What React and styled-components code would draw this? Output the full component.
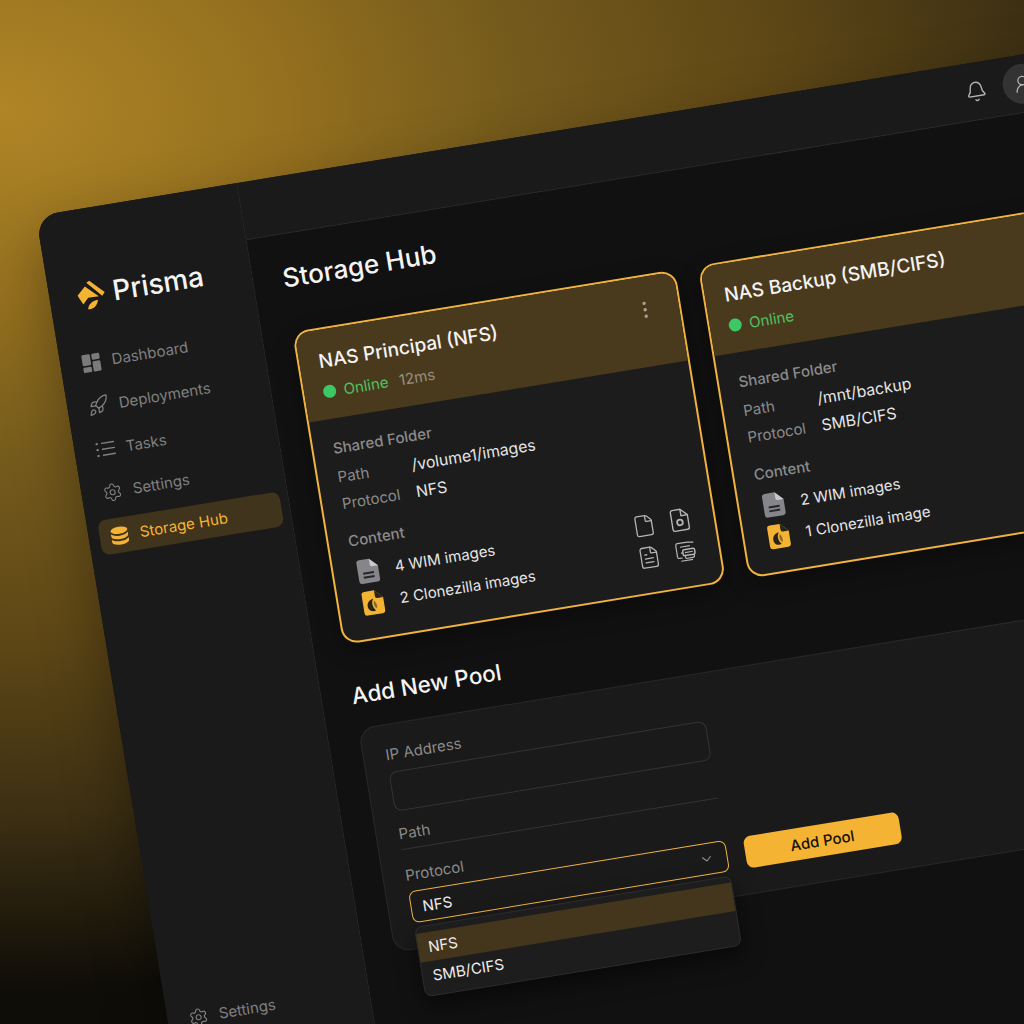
import React from "react";
import styled, { createGlobalStyle } from "styled-components";
import { Rocket, Settings, Bell, UserRound, ChevronDown, File, FileText } from "lucide-react";

const GOLD = "#f5b334";
const MUTED = "#8b8b8b";

const Global = createGlobalStyle`
  html, body { margin: 0; padding: 0; background: #111; }
  * { box-sizing: border-box; }
`;

const Stage = styled.div`
  width: 1024px;
  height: 1024px;
  overflow: hidden;
  padding: 215.5px 0 0 36px;
  font-family: Inter, "Liberation Sans", sans-serif;
  background:
    radial-gradient(ellipse 1300px 880px at 0 110px, #b08526 0%, #94701f 22%, #745a1c 40%, #5e4716 60%, #3c2f13 80%, #0f0d08 100%);
`;

const Window = styled.div`
  width: 1060px;
  height: 1300px;
  display: flex;
  background: #1a1a1a;
  border-radius: 22px 0 0 0;
  transform: rotate(-9.3deg);
  transform-origin: 0 0;
  box-shadow: 0 24px 60px rgba(0, 0, 0, 0.35);
`;

const Sidebar = styled.aside`
  width: 204px;
  flex: none;
  display: flex;
  flex-direction: column;
  padding: 70px 8px 10px 10.5px;
  background: #1a1a1a;
  border-right: 1px solid #2b2b2b;
  border-radius: 22px 0 0 0;
`;

const Brand = styled.div`
  height: 32px;
  display: flex;
  align-items: center;
  gap: 7px;
  padding-left: 15px;
  margin-bottom: 34px;
  font-size: 28px;
  font-weight: 500;
  color: #f4f4f4;
`;

const Nav = styled.nav`
  display: flex;
  flex-direction: column;
  gap: 8.75px;
`;

const NavItem = styled.div`
  height: 35px;
  display: flex;
  align-items: center;
  gap: 11px;
  padding-left: 10px;
  border-radius: 8px;
  font-size: 15px;
  color: ${(p) => (p.$active ? GOLD : "#808080")};
  background: ${(p) => (p.$active ? "#40341c" : "transparent")};
  svg { flex: none; }
`;

const NavBottom = styled(NavItem)`
  margin-top: 453px;
`;

const Column = styled.div`
  flex: 1;
  display: flex;
  flex-direction: column;
  min-width: 0;
`;

const Topbar = styled.header`
  height: 58px;
  flex: none;
  display: flex;
  align-items: center;
  justify-content: flex-end;
  gap: 16px;
  padding-right: 45px;
  background: #1a1a1a;
  border-bottom: 1px solid #2b2b2b;
  color: #b5b5b5;
`;

const Avatar = styled.div`
  width: 40px;
  height: 40px;
  border-radius: 50%;
  background: #333;
  display: flex;
  align-items: center;
  justify-content: center;
  color: #b5b5b5;
`;

const Main = styled.main`
  flex: 1;
  background: #111;
  padding: 27px 29px 0 31px;
`;

const PageTitle = styled.h1`
  margin: 0 0 37px -1.5px;
  font-size: 26px;
  line-height: 34px;
  font-weight: 500;
  color: #f4f4f4;
`;

const Cards = styled.div`
  display: grid;
  grid-template-columns: 388px 388px;
  gap: 23px;
  margin-left: -1.5px;
`;

const Card = styled.section`
  height: 317px;
  border: 2px solid #f0b240;
  border-radius: 16px;
  background: #1c1c1c;
  overflow: hidden;
  box-shadow: 0 8px 22px rgba(0, 0, 0, 0.35);
`;

const CardHead = styled.div`
  position: relative;
  height: 90px;
  padding: 20px 20px 0;
  background: #4a3a1d;
`;

const CardName = styled.h2`
  margin: 0;
  font-size: 19px;
  line-height: 24px;
  font-weight: 500;
  color: #f4f4f4;
`;

const Status = styled.div`
  margin-top: 8px;
  height: 20px;
  display: flex;
  align-items: center;
  font-size: 15px;
  color: #4fc263;
`;

const Dot = styled.span`
  width: 13px;
  height: 13px;
  margin: 0 8px 0 -1px;
  border-radius: 50%;
  background: #3dc765;
`;

const Latency = styled.span`
  margin-left: 11px;
  color: #97917f;
`;

const MenuDots = styled.svg`
  position: absolute;
  top: 24px;
  right: 26px;
  color: #a5a193;
`;

const CardBody = styled.div`
  padding: 20px 20px 0;
`;

const Label = styled.div`
  height: 20px;
  line-height: 20px;
  font-size: 15px;
  font-weight: 500;
  color: ${MUTED};
`;

const Specs = styled.dl`
  display: grid;
  grid-template-columns: 75px 1fr;
  row-gap: 7px;
  margin: 9px 0 18px;
`;

const SpecKey = styled.dt`
  height: 20px;
  line-height: 20px;
  font-size: 15px;
  color: ${MUTED};
`;

const SpecValue = styled.dd`
  margin: 0;
  height: 20px;
  line-height: 20px;
  font-size: 15.8px;
  color: #e6e6e6;
`;

const ContentRow = styled.div`
  display: flex;
  justify-content: space-between;
  align-items: flex-end;
`;

const Items = styled.ul`
  list-style: none;
  padding: 0;
  margin: 8.5px 0 0;
  display: flex;
  flex-direction: column;
  gap: 6px;
`;

const Item = styled.li`
  height: 26px;
  display: flex;
  align-items: center;
  gap: 15px;
  padding-left: 3px;
  font-size: 15px;
  color: #e6e6e6;
`;

const Tools = styled.div`
  display: grid;
  grid-template-columns: 22px 22px;
  grid-auto-rows: 26px;
  gap: 6px 14px;
  margin-right: 3px;
  color: #b4b4b4;
  justify-items: center;
  align-items: center;
`;

const SectionTitle = styled.h2`
  margin: 36px 0 17px -1px;
  font-size: 22.5px;
  line-height: 32px;
  font-weight: 500;
  color: #f4f4f4;
`;

const Panel = styled.section`
  height: 227px;
  display: flex;
  align-items: flex-end;
  gap: 17.5px;
  padding: 22px 22px 25px;
  background: #1a1a1a;
  border: 1px solid #292929;
  border-radius: 16px;
`;

const Form = styled.div`
  width: 321px;
  display: flex;
  flex-direction: column;
`;

const FieldLabel = styled.label`
  height: 20px;
  line-height: 20px;
  font-size: 15px;
  color: ${MUTED};
`;

const BoxInput = styled.div`
  height: 40px;
  margin: 7px 0 13px;
  border: 1px solid #333;
  border-radius: 8px;
`;

const LineInput = styled.div`
  height: 6px;
  border-bottom: 1px solid #333;
  margin-bottom: 16px;
`;

const SelectWrap = styled.div`
  position: relative;
  margin-top: 6px;
`;

const Select = styled.div`
  position: relative;
  z-index: 2;
  height: 32px;
  display: flex;
  align-items: center;
  justify-content: space-between;
  padding: 0 12px 0 11px;
  border: 1.5px solid #eeb040;
  border-radius: 7px;
  font-size: 15px;
  color: #eee;
  svg { color: #8f8f8f; }
`;

const Dropdown = styled.div`
  position: absolute;
  z-index: 1;
  top: 36px;
  left: 0;
  right: 0;
  padding: 6px 0 5px;
  background: #1d1d1d;
  border: 1px solid #2c2c2c;
  border-radius: 8px;
  box-shadow: 0 10px 22px rgba(0, 0, 0, 0.5);
`;

const Option = styled.div`
  height: 29px;
  display: flex;
  align-items: center;
  padding-left: 10px;
  font-size: 15px;
  color: #eee;
  background: ${(p) => (p.$selected ? "#43361d" : "transparent")};
`;

const AddButton = styled.button`
  width: 157px;
  height: 32px;
  border: 0;
  border-radius: 7px;
  background: ${GOLD};
  color: #15120a;
  font: 500 15px Inter, "Liberation Sans", sans-serif;
`;

const RocketIcon = styled(Rocket)`
  margin: 0 -1px;
`;

const DashboardIcon = () => (
  <svg width="20" height="20" viewBox="0 0 20 20" fill="#7b7b7b">
    <rect x="1" y="1" width="8.5" height="11" rx="1.2" />
    <rect x="1" y="13.5" width="8.5" height="5.5" rx="1.2" />
    <rect x="11" y="1" width="8" height="6" rx="1.2" />
    <rect x="11" y="8.5" width="8" height="10.5" rx="1.2" />
  </svg>
);

const TasksIcon = () => (
  <svg width="20" height="20" viewBox="0 0 20 20" fill="none" stroke="#808080" strokeWidth="1.4" strokeLinecap="round">
    <path d="M7 4h12M7 10h12M7 16h12" />
    <path d="M1.800 4h.4M1.800 10h.4M1.800 16h.4" strokeWidth="2.200" />
  </svg>
);

const DatabaseIcon = () => (
  <svg width="20" height="20" viewBox="0 0 20 20" fill={GOLD}>
    <ellipse cx="10" cy="4.5" rx="8.5" ry="3.5" />
    <path d="M1.5 7.2C3 9.2 6.5 10 10 10s7-.8 8.500-2.800V10c0 1.900-3.800 3.400-8.500 3.400S1.500 11.900 1.500 10z" />
    <path d="M1.500 12.700C3 14.700 6.500 15.500 10 15.500s7-.8 8.500-2.800v2.800c0 1.900-3.800 3.400-8.500 3.400s-8.500-1.500-8.500-3.400z" />
  </svg>
);

const Logo = () => (
  <svg width="31" height="31" viewBox="6 6 32 32" fill={GOLD}>
    <g transform="rotate(9.3 21 23)">
      <path d="M17 9.500 20 7.500 36 19 33.500 23z" />
      <path d="M8 23 15.500 13.500 30 23.500 19 25 14 32z" />
      <path d="M19 37C19 32 23 28 29 27 29 32 25 37 19 37z" />
    </g>
  </svg>
);

const WimIcon = () => (
  <svg width="24" height="26" viewBox="0 0 24 26">
    <path d="M4 1h10l8 8v13a3 3 0 0 1-3 3H4a3 3 0 0 1-3-3V4a3 3 0 0 1 3-3z" fill="#85858a" />
    <path d="M14 1l8 8h-6a2 2 0 0 1-2-2z" fill="#c9c9cc" />
    <path d="M6 15h11M6 19h11" stroke="#26262a" strokeWidth="2" />
  </svg>
);

const CloneIcon = () => (
  <svg width="24" height="26" viewBox="0 0 24 26">
    <path d="M4 1h10l8 8v13a3 3 0 0 1-3 3H4a3 3 0 0 1-3-3V4a3 3 0 0 1 3-3z" fill={GOLD} />
    <path d="M14 1l8 8h-6a2 2 0 0 1-2-2z" fill="#2a2416" />
    <path d="M12 9C6 10 4 15 6 19c2 3 5 3 7 2-3-3-4-8-1-12z" fill="#2a2416" />
    <path d="M12.500 11c-1.500 3-1 6 1.500 8.500 1.500-3 .5-6-1.500-8.500z" fill="#8a6c2c" />
  </svg>
);

const FileGearIcon = () => (
  <svg width="20" height="24" viewBox="0 0 20 24" fill="none" stroke="currentColor" strokeWidth="1.400" strokeLinejoin="round">
    <path d="M4 1.500h8l6.500 6.500v12.500a2 2 0 0 1-2 2H4a2 2 0 0 1-2-2v-17a2 2 0 0 1 2-2z" />
    <path d="M12 1.500V8h6.500" />
    <circle cx="10" cy="14.500" r="2.800" strokeWidth="1.800" />
  </svg>
);

const FileStackIcon = () => (
  <svg width="24" height="24" viewBox="0 0 24 24" fill="none" stroke="currentColor" strokeWidth="1.200" strokeLinejoin="round">
    <path d="M4 5a2 2 0 0 1 2-2h10l6 1" />
    <path d="M4 5v11a2 2 0 0 0 2 2h3" />
    <path d="M8 7h10" />
    <rect x="10" y="10" width="12" height="6" rx="1.500" strokeWidth="1.500" />
    <path d="M8 13h2M12 13h8M12 19h7a2 2 0 0 0 2-2v-1M12 16v3" />
    <path d="M7 21h12" />
  </svg>
);

const CardTools = () => (
  <Tools>
    <File size={24} strokeWidth={1.3} />
    <FileGearIcon />
    <FileText size={24} strokeWidth={1.3} />
    <FileStackIcon />
  </Tools>
);

const PoolCard = ({ name, latency, path, protocol, wim, clone }) => (
  <Card>
    <CardHead>
      <CardName>{name}</CardName>
      <Status>
        <Dot />
        Online
        {latency && <Latency>{latency}</Latency>}
      </Status>
      <MenuDots width="16" height="18" viewBox="0 0 16 18" fill="currentColor">
        <circle cx="8" cy="2.500" r="1.700" />
        <circle cx="8" cy="9" r="1.700" />
        <circle cx="8" cy="15.500" r="1.700" />
      </MenuDots>
    </CardHead>
    <CardBody>
      <Label>Shared Folder</Label>
      <Specs>
        <SpecKey>Path</SpecKey>
        <SpecValue>{path}</SpecValue>
        <SpecKey>Protocol</SpecKey>
        <SpecValue>{protocol}</SpecValue>
      </Specs>
      <Label>Content</Label>
      <ContentRow>
        <Items>
          <Item>
            <WimIcon />
            {wim}
          </Item>
          <Item>
            <CloneIcon />
            {clone}
          </Item>
        </Items>
        <CardTools />
      </ContentRow>
    </CardBody>
  </Card>
);

export default function App() {
  return (
    <>
      <Global />
      <Stage>
        <Window>
          <Sidebar>
            <Brand>
              <Logo />
              Prisma
            </Brand>
            <Nav>
              <NavItem>
                <DashboardIcon />
                Dashboard
              </NavItem>
              <NavItem>
                <RocketIcon size={22} strokeWidth={1.4} />
                Deployments
              </NavItem>
              <NavItem>
                <TasksIcon />
                Tasks
              </NavItem>
              <NavItem>
                <Settings size={20} strokeWidth={1.4} />
                Settings
              </NavItem>
              <NavItem $active>
                <DatabaseIcon />
                Storage Hub
              </NavItem>
            </Nav>
            <NavBottom>
              <Settings size={20} strokeWidth={1.4} />
              Settings
            </NavBottom>
          </Sidebar>
          <Column>
            <Topbar>
              <Bell size={22} strokeWidth={1.5} />
              <Avatar>
                <UserRound size={20} strokeWidth={1.5} />
              </Avatar>
            </Topbar>
            <Main>
              <PageTitle>Storage Hub</PageTitle>
              <Cards>
                <PoolCard
                  name="NAS Principal (NFS)"
                  latency="12ms"
                  path="/volume1/images"
                  protocol="NFS"
                  wim="4 WIM images"
                  clone="2 Clonezilla images"
                />
                <PoolCard
                  name="NAS Backup (SMB/CIFS)"
                  path="/mnt/backup"
                  protocol="SMB/CIFS"
                  wim="2 WIM images"
                  clone="1 Clonezilla image"
                />
              </Cards>
              <SectionTitle>Add New Pool</SectionTitle>
              <Panel>
                <Form>
                  <FieldLabel>IP Address</FieldLabel>
                  <BoxInput />
                  <FieldLabel>Path</FieldLabel>
                  <LineInput />
                  <FieldLabel>Protocol</FieldLabel>
                  <SelectWrap>
                    <Select>
                      NFS
                      <ChevronDown size={16} strokeWidth={1.6} />
                    </Select>
                    <Dropdown>
                      <Option $selected>NFS</Option>
                      <Option>SMB/CIFS</Option>
                    </Dropdown>
                  </SelectWrap>
                </Form>
                <AddButton>Add Pool</AddButton>
              </Panel>
            </Main>
          </Column>
        </Window>
      </Stage>
    </>
  );
}
